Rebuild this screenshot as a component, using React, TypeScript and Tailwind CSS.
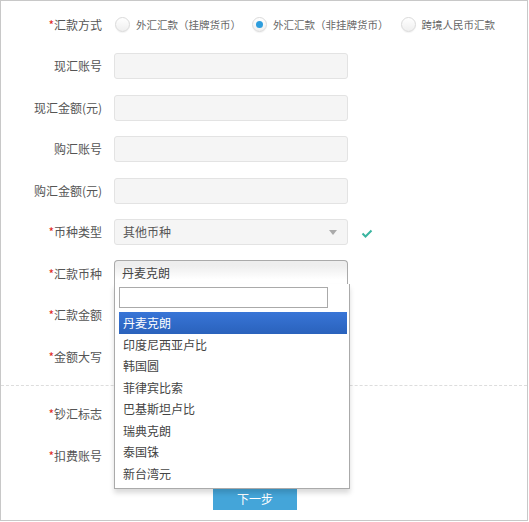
import React from 'react'

const font = { fontFamily: '"Noto Sans CJK SC", "Liberation Sans", sans-serif' }

// label column + control, one form row
const Row = ({
  label,
  required,
  children,
}: {
  label: string
  required?: boolean
  children?: React.ReactNode
}) => (
  <div className="flex h-[41.5px] items-center">
    <div className="w-[101px] text-right text-[12px] leading-none text-[#555]">
      {required && <span className="text-[#e0281e]">*</span>}
      {label}
    </div>
    <div className="ml-[12px] flex items-center">{children}</div>
  </div>
)

const Radio = ({ checked, label, className }: { checked?: boolean; label: string; className?: string }) => (
  <div className={`flex items-center ${className ?? ''}`}>
    <span className="flex h-[15px] w-[15px] items-center justify-center rounded-full border border-[#dadada] bg-gradient-to-b from-white to-[#efefef] shadow-[0_1px_1px_rgba(0,0,0,0.05)]">
      {checked && <span className="h-[7px] w-[7px] rounded-full bg-[#2e9ddd]" />}
    </span>
    <span className="ml-[6px] text-[10.5px] leading-none text-[#666]">{label}</span>
  </div>
)

const TextBox = () => (
  <div className="h-[26px] w-[234px] rounded-[3px] border border-[#e3e3e3] bg-[#f5f5f5]" />
)

const currencies = ['丹麦克朗', '印度尼西亚卢比', '韩国圆', '菲律宾比索', '巴基斯坦卢比', '瑞典克朗', '泰国铢', '新台湾元']

export default function App() {
  return (
    <div className="h-[522px] w-[529px] bg-white" style={font}>
      <div className="relative h-[521px] w-[528px] border border-[#c8c8c8]">
        <div className="pt-[3px]">
          <Row label="汇款方式" required>
            <Radio label="外汇汇款（挂牌货币）" className="ml-[1px]" />
            <Radio label="外汇汇款（非挂牌货币）" checked className="ml-[11px]" />
            <Radio label="跨境人民币汇款" className="ml-[12px]" />
          </Row>
          <Row label="现汇账号">
            <TextBox />
          </Row>
          <Row label="现汇金额(元)">
            <TextBox />
          </Row>
          <Row label="购汇账号">
            <TextBox />
          </Row>
          <Row label="购汇金额(元)">
            <TextBox />
          </Row>
          <Row label="币种类型" required>
            <div className="flex h-[26px] w-[234px] items-center justify-between rounded-[3px] border border-[#e3e3e3] bg-[#f5f5f5] pl-[8px] pr-[10px]">
              <span className="text-[12px] leading-none text-[#555]">其他币种</span>
              <span className="h-0 w-0 border-x-[4px] border-t-[5px] border-x-transparent border-t-[#aaa]" />
            </div>
            <svg width="12" height="9" viewBox="0 0 12 9" className="ml-[13px] mt-[2px]">
              <path d="M1.5 4.5 L4.5 7.5 L10.5 1.5" fill="none" stroke="#3ab5a0" strokeWidth="2" />
            </svg>
          </Row>
          <Row label="汇款币种" required>
            <div className="relative -mt-[3px]">
              <div className="flex h-[24px] w-[234px] items-center rounded-t-[4px] border border-b-0 border-[#aaa] bg-gradient-to-b from-[#eee] from-20% to-white to-80% pl-[7px]">
                <span className="text-[12px] leading-none text-[#444]">丹麦克朗</span>
              </div>
              <div className="absolute left-0 top-full z-10 w-[236px] border border-t-0 border-[#aaa] bg-white pb-[4px] pl-[4px] pt-[3px] shadow-[0_4px_5px_rgba(0,0,0,0.15)]">
                <div className="h-[21px] w-[209px] border border-[#aaa] bg-white" />
                <ul className="mt-[4px] w-[228px]">
                  {currencies.map((c, i) => (
                    <li
                      key={c}
                      className={`flex h-[21.5px] items-center pl-[4px] text-[12px] leading-none ${
                        i === 0 ? 'bg-gradient-to-b from-[#3875d7] to-[#2a62bc] text-white' : 'text-[#444]'
                      }`}
                    >
                      {c}
                    </li>
                  ))}
                </ul>
              </div>
            </div>
          </Row>
          <Row label="汇款金额" required />
          <Row label="金额大写" required />
          <div className="mt-[7px] border-t border-dashed border-[#ddd]" />
          <div className="mt-[8px]">
            <Row label="钞汇标志" required />
            <Row label="扣费账号" required />
          </div>
          <div className="ml-[212px] mt-[12px] flex h-[21px] w-[84px] items-center justify-center bg-[#44a5d9] text-[12px] leading-none text-white">
            下一步
          </div>
        </div>
      </div>
    </div>
  )
}
